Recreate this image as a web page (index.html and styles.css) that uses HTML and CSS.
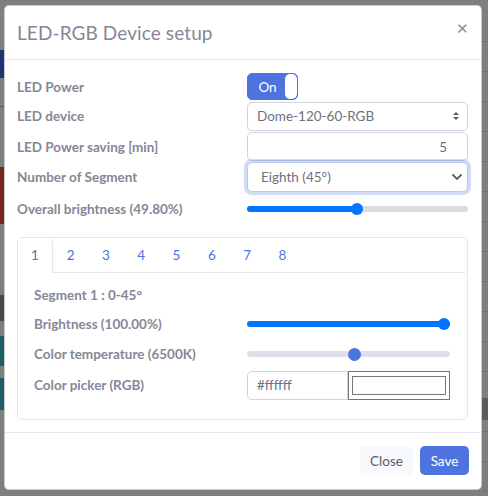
FILE: index.html
```html
<!DOCTYPE html>
<html lang="en">
<head>
<meta charset="utf-8">
<title>LED-RGB Device setup</title>
<link rel="stylesheet" href="styles.css">
</head>
<body>
<div class="backdrop">
  <div class="modal">
    <div class="modal-header">
      <h5 class="modal-title">LED-RGB Device setup</h5>
      <button class="close" type="button" aria-label="Close">×</button>
    </div>
    <div class="modal-body">
      <div class="form-row">
        <label class="lbl">LED Power</label>
        <div class="ctl">
          <div class="toggle"><span class="toggle-on">On</span><span class="toggle-knob"></span></div>
        </div>
      </div>
      <div class="form-row">
        <label class="lbl">LED device</label>
        <div class="ctl sel-wrap">
          <select class="field select"><option>Dome-120-60-RGB</option></select>
          <svg class="sel-icon updown" width="8" height="10" viewBox="0 0 8 10"><path d="M1 4 L4 1 L7 4 Z M1 6 L4 9 L7 6 Z" fill="#5a5c69"/></svg>
        </div>
      </div>
      <div class="form-row">
        <label class="lbl">LED Power saving [min]</label>
        <div class="ctl">
          <input class="field num" type="text" value="5">
        </div>
      </div>
      <div class="form-row">
        <label class="lbl">Number of Segment</label>
        <div class="ctl sel-wrap">
          <select class="field select focus"><option>Eighth (45°)</option></select>
          <svg class="sel-icon chev" width="12" height="8" viewBox="0 0 12 8"><path d="M1.5 1.5 L6 6 L10.5 1.5" fill="none" stroke="#5a5c69" stroke-width="1.8"/></svg>
        </div>
      </div>
      <div class="form-row range-row">
        <label class="lbl">Overall brightness (49.80%)</label>
        <div class="ctl">
          <input class="range range-blue" type="range" min="0" max="100" step="0.1" value="49.8" style="--fill:49.8%">
        </div>
      </div>

      <div class="seg-card">
        <ul class="tabs">
          <li class="tab active">1</li>
          <li class="tab">2</li>
          <li class="tab">3</li>
          <li class="tab">4</li>
          <li class="tab">5</li>
          <li class="tab">6</li>
          <li class="tab">7</li>
          <li class="tab">8</li>
        </ul>
        <div class="seg-body">
          <div class="seg-title">Segment 1 : 0-45°</div>
          <div class="seg-row">
            <label class="lbl">Brightness (100.00%)</label>
            <div class="ctl">
              <input class="range range-blue" type="range" min="0" max="100" value="100" style="--fill:100%">
            </div>
          </div>
          <div class="seg-row">
            <label class="lbl">Color temperature (6500K)</label>
            <div class="ctl">
              <input class="range range-temp" type="range" min="2000" max="10500" value="6500">
            </div>
          </div>
          <div class="seg-row picker-row">
            <label class="lbl">Color picker (RGB)</label>
            <div class="ctl picker">
              <input class="field hex" type="text" value="#ffffff">
              <div class="swatch-box"><div class="swatch"></div></div>
            </div>
          </div>
        </div>
      </div>
    </div>
    <div class="modal-footer">
      <button class="btn btn-light" type="button">Close</button>
      <button class="btn btn-primary" type="button">Save</button>
    </div>
  </div>
</div>
</body>
</html>
```

FILE: styles.css
```css
* { box-sizing: border-box; }
html, body { margin: 0; padding: 0; }
body {
  width: 488px;
  height: 496px;
  overflow: hidden;
  font-family: Lato, "Open Sans", sans-serif;
  background-color: #7f7f7f;
  background-image:
    linear-gradient(to bottom,
      transparent 0, transparent 50px,
      #1f3370 50px, #1f3370 78px,
      transparent 78px, transparent 106px,
      #5a5a5a 106px, #5a5a5a 107px,
      transparent 107px, transparent 167px,
      #74261f 167px, #74261f 224px,
      transparent 224px, transparent 295px,
      #47474c 295px, #47474c 321px,
      transparent 321px, transparent 336px,
      #1b5d61 336px, #1b5d61 366px,
      transparent 366px, transparent 378px,
      #1b5d61 378px, #1b5d61 410px,
      transparent 410px),
    linear-gradient(to bottom,
      transparent 0, transparent 398px,
      #5c5c5e 398px, #5c5c5e 420px,
      transparent 420px),
    repeating-linear-gradient(to bottom,
      transparent 0, transparent 29px,
      #6f6f6f 29px, #6f6f6f 30px);
  background-size: 4px 496px, 6px 496px, 6px 496px;
  background-position: 0 0, 482px 0, 482px 12px;
  background-repeat: no-repeat;
}
.backdrop {
  padding: 5px 6px 0 4px;
}
.modal {
  width: 478px;
  background: #fff;
  border: 1px solid rgba(0,0,0,.2);
  border-radius: 5px;
  display: flex;
  flex-direction: column;
}
.modal-header {
  height: 54px;
  flex: none;
  display: flex;
  align-items: center;
  justify-content: space-between;
  padding: 0 13px 0 12px;
  border-bottom: 1px solid #e3e6f0;
}
.modal-title {
  margin: 0;
  font-size: 19px;
  font-weight: 400;
  color: #858796;
  letter-spacing: 0.1px;
}
.close {
  border: 0;
  background: none;
  padding: 0;
  font-family: Lato, sans-serif;
  font-size: 20px;
  line-height: 1;
  color: #8a8b93;
  margin-top: -11px;
  cursor: pointer;
}
.modal-body {
  padding: 12px 13px 12px 12px;
}
.form-row {
  display: grid;
  grid-template-columns: 230px 221px;
  align-items: center;
  height: 30.5px;
}
.form-row:first-child { height: 29px; }
.lbl {
  font-size: 13.5px;
  font-weight: 700;
  color: #858796;
}
.ctl { position: relative; }
.field {
  display: block;
  width: 100%;
  height: 29px;
  border: 1px solid #d1d3e2;
  border-radius: 5px;
  background: #fff;
  font-family: Lato, "Open Sans", sans-serif;
  font-size: 13.5px;
  color: #6e707e;
  padding: 0 9px;
  outline: none;
}
.select {
  -webkit-appearance: none;
  appearance: none;
}
.select.focus {
  height: 30px;
  border-color: #bac8f3;
  box-shadow: 0 0 0 3px rgba(78,115,223,.25);
  padding-left: 13px;
}
.sel-icon {
  position: absolute;
  top: 50%;
  transform: translateY(-50%);
  pointer-events: none;
}
.updown { right: 8px; }
.chev { right: 5px; }
.num {
  text-align: right;
  padding-right: 20px;
}
.toggle {
  width: 51px;
  height: 27px;
  border-radius: 5px;
  background: #4e73df;
  border: 1px solid #4e73df;
  display: flex;
  align-items: center;
  overflow: hidden;
}
.toggle-on {
  flex: 1;
  color: #fff;
  font-size: 13.5px;
  text-align: center;
  padding-left: 2px;
}
.toggle-knob {
  width: 12px;
  height: 25px;
  background: #fff;
  border-radius: 5px;
}
.range {
  -webkit-appearance: none;
  appearance: none;
  display: block;
  width: 100%;
  margin: 0;
  height: 13px;
  background: transparent;
}
.range::-webkit-slider-runnable-track {
  height: 6px;
  border-radius: 3px;
}
.range::-webkit-slider-thumb {
  -webkit-appearance: none;
  width: 12px;
  height: 12px;
  border-radius: 50%;
  margin-top: -3px;
  border: 0;
}
.range-blue::-webkit-slider-runnable-track {
  background: linear-gradient(to right, #0075ff 0, #0075ff var(--fill), #dcdcdc var(--fill));
}
.range-blue::-webkit-slider-thumb { background: #0075ff; }
.range-temp::-webkit-slider-runnable-track { background: #dddfeb; }
.range-temp::-webkit-slider-thumb {
  background: #4e73df;
  width: 13px;
  height: 13px;
  margin-top: -3.5px;
}
.range-row { margin-top: 1px; }

.seg-card {
  margin-top: 13px;
  border: 1px solid #e3e6f0;
  border-radius: 5px;
}
.tabs {
  list-style: none;
  margin: 0;
  padding: 0;
  display: flex;
  height: 34px;
}
.tab {
  width: 35.3px;
  text-align: center;
  line-height: 34px;
  font-size: 13.5px;
  color: #4e73df;
}
.tab.active {
  color: #6e707e;
  border-right: 1px solid #e3e6f0;
  border-top-right-radius: 5px;
  background: #fff;
  margin-bottom: -1px;
  position: relative;
  z-index: 1;
  width: 35px;
}
.seg-body {
  border-top: 1px solid #e3e6f0;
  border-radius: 5px;
  padding: 14px 16px 19px 16px;
}
.seg-title {
  font-size: 13.5px;
  font-weight: 700;
  color: #858796;
  height: 16px;
  line-height: 16px;
  margin-bottom: 6px;
}
.seg-row {
  display: grid;
  grid-template-columns: 213px 203px;
  align-items: center;
  height: 30px;
}
.picker-row { height: 29px; margin-top: 1.5px; }
.picker {
  display: flex;
}
.hex {
  width: 101px;
  flex: none;
  border-radius: 5px 0 0 5px;
  padding-left: 9px;
}
.swatch-box {
  width: 102px;
  height: 29px;
  border: 1px solid #767676;
  background: #fff;
  padding: 4px 3px;
}
.swatch {
  width: 100%;
  height: 100%;
  border: 1px solid #777;
  background: #fff;
}
.modal-footer {
  height: 57px;
  flex: none;
  border-top: 1px solid #e3e6f0;
  display: flex;
  align-items: center;
  justify-content: flex-end;
  gap: 7px;
  padding: 0 12px 0 0;
}
.btn {
  height: 29px;
  border: 1px solid transparent;
  border-radius: 5px;
  font-family: Lato, "Open Sans", sans-serif;
  font-size: 13.5px;
  padding: 0 9px;
  cursor: pointer;
}
.btn-light {
  background: #f8f9fc;
  color: #5a5c69;
  width: 53px;
}
.btn-primary {
  background: #4e73df;
  color: #fff;
  width: 49px;
}
```
